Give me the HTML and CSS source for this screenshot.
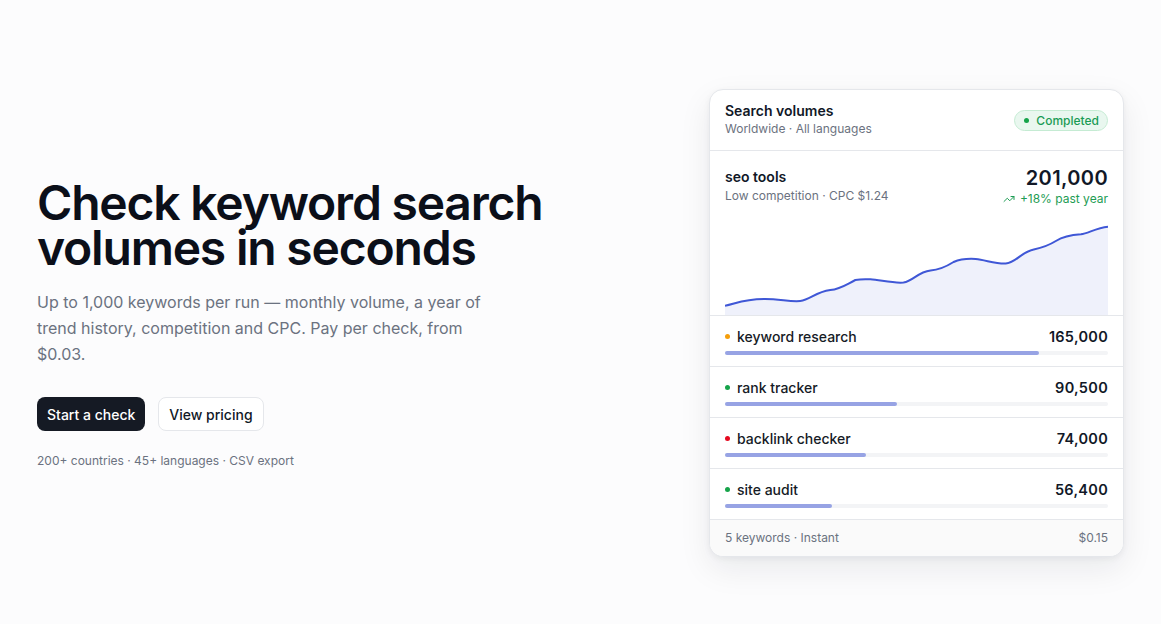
FILE: index.html
```html
<!DOCTYPE html>
<html lang="en">
<head>
    <meta charset="UTF-8">
    <meta name="viewport" content="width=device-width, initial-scale=1.0">
    <title>Keyword Search Volume Checker</title>
    <link rel="stylesheet" href="styles.css">
</head>
<body>
    <main class="hero">
        <div class="hero-copy">
            <h1>Check keyword search volumes in seconds</h1>
            <p class="lead">Up to 1,000 keywords per run — monthly volume, a year of trend history, competition and CPC. Pay per check, from $0.03.</p>
            <div class="actions">
                <a class="btn btn-dark" href="#">Start a check</a>
                <a class="btn btn-light" href="#">View pricing</a>
            </div>
            <p class="meta">200+ countries · 45+ languages · CSV export</p>
        </div>

        <div class="card">
            <div class="card-head">
                <div>
                    <div class="card-title">Search volumes</div>
                    <div class="card-sub">Worldwide · All languages</div>
                </div>
                <span class="badge"><span class="badge-dot"></span>Completed</span>
            </div>

            <div class="main-kw">
                <div class="main-top">
                    <div>
                        <div class="kw-name">seo tools</div>
                        <div class="card-sub">Low competition · CPC $1.24</div>
                    </div>
                    <div class="main-num">
                        <div class="big">201,000</div>
                        <div class="trend">
                            <svg width="12" height="12" viewBox="0 0 24 24" fill="none" stroke="currentColor" stroke-width="2" stroke-linecap="round" stroke-linejoin="round"><polyline points="22 7 13.5 15.5 8.5 10.5 2 17"/><polyline points="16 7 22 7 22 13"/></svg>
                            +18% past year
                        </div>
                    </div>
                </div>
                <svg class="chart" viewBox="0 0 382 93" preserveAspectRatio="none">
                    <path class="chart-fill" d="M0 83.7 C10 82 18 77 40 77 C55 77 65 80 75 79 C85 78 90 70 105 68 C115 67 120 63 130 58 C135 57 140 57 145 57.3 C155 58 168 61.5 178 60.5 C188 59 192 50 205 48.5 C212 48 220 45 228 40 C235 37 242 36.5 250 37 C260 38 270 42 280 41.5 C290 41 295 30 308 27.5 C315 26 322 24 330 19 C338 14 345 13 355 12.3 C362 11.5 370 6 382 4.7 L382 93 L0 93 Z"/>
                    <path class="chart-line" d="M0 83.7 C10 82 18 77 40 77 C55 77 65 80 75 79 C85 78 90 70 105 68 C115 67 120 63 130 58 C135 57 140 57 145 57.3 C155 58 168 61.5 178 60.5 C188 59 192 50 205 48.5 C212 48 220 45 228 40 C235 37 242 36.5 250 37 C260 38 270 42 280 41.5 C290 41 295 30 308 27.5 C315 26 322 24 330 19 C338 14 345 13 355 12.3 C362 11.5 370 6 382 4.7"/>
                </svg>
            </div>

            <div class="row">
                <div class="row-top">
                    <span class="row-name"><span class="dot orange"></span>keyword research</span>
                    <span class="row-num">165,000</span>
                </div>
                <div class="bar"><div class="bar-fill" style="width: 82%"></div></div>
            </div>
            <div class="row">
                <div class="row-top">
                    <span class="row-name"><span class="dot green"></span>rank tracker</span>
                    <span class="row-num">90,500</span>
                </div>
                <div class="bar"><div class="bar-fill" style="width: 45%"></div></div>
            </div>
            <div class="row">
                <div class="row-top">
                    <span class="row-name"><span class="dot red"></span>backlink checker</span>
                    <span class="row-num">74,000</span>
                </div>
                <div class="bar"><div class="bar-fill" style="width: 36.8%"></div></div>
            </div>
            <div class="row">
                <div class="row-top">
                    <span class="row-name"><span class="dot green"></span>site audit</span>
                    <span class="row-num">56,400</span>
                </div>
                <div class="bar"><div class="bar-fill" style="width: 28%"></div></div>
            </div>

            <div class="card-foot">
                <span>5 keywords · Instant</span>
                <span>$0.15</span>
            </div>
        </div>
    </main>
</body>
</html>
```

FILE: styles.css
```css
* {
    box-sizing: border-box;
}
body {
    margin: 0;
    font-family: Inter, "Noto Sans", Arial, sans-serif;
    background: #fcfcfd;
    color: #111827;
}
.hero {
    min-height: 624px;
    padding: 22px 37px 0 37px;
    display: flex;
    align-items: center;
    justify-content: space-between;
}
.hero-copy {
    width: 520px;
    padding-top: 3px;
}
h1 {
    margin: 0;
    font-size: 48px;
    line-height: 45px;
    font-weight: 600;
    letter-spacing: -0.025em;
    color: #0b0f19;
}
.lead {
    margin: 19px 0 0;
    max-width: 460px;
    font-size: 16px;
    line-height: 26px;
    color: #6b7280;
}
.actions {
    display: flex;
    gap: 13px;
    margin-top: 30px;
}
.btn {
    display: inline-flex;
    align-items: center;
    height: 34px;
    padding: 0 10px;
    border-radius: 8px;
    font-size: 14px;
    font-weight: 500;
    text-decoration: none;
}
.btn-dark {
    background: #151a24;
    color: #fff;
}
.btn-light {
    background: #fff;
    color: #111827;
    border: 1px solid #e5e7eb;
}
.meta {
    margin: 22px 0 0;
    font-size: 12px;
    line-height: 16px;
    color: #6b7280;
}

.card {
    width: 415px;
    background: #fff;
    border: 1px solid #e5e7eb;
    border-radius: 14px;
    box-shadow: 0 12px 32px rgba(17, 24, 39, 0.08), 0 2px 6px rgba(17, 24, 39, 0.05);
    overflow: hidden;
}
.card-head {
    display: flex;
    justify-content: space-between;
    align-items: center;
    padding: 12px 15px;
    border-bottom: 1px solid #e5e7eb;
}
.card-title {
    font-size: 14px;
    line-height: 18px;
    font-weight: 600;
}
.card-sub {
    font-size: 12px;
    line-height: 18px;
    color: #6b7280;
}
.badge {
    display: inline-flex;
    align-items: center;
    gap: 7px;
    height: 21px;
    padding: 0 8px 0 9px;
    border-radius: 999px;
    background: #e9f7ef;
    border: 1px solid #c5ebd3;
    color: #1a9b55;
    font-size: 12px;
    font-weight: 500;
}
.badge-dot {
    width: 5px;
    height: 5px;
    border-radius: 50%;
    background: #16a34a;
}
.main-kw {
    padding: 16px 15px 0;
}
.main-top {
    display: flex;
    justify-content: space-between;
    margin-bottom: 15px;
}
.kw-name {
    font-size: 14px;
    line-height: 20px;
    font-weight: 600;
}
.main-num {
    text-align: right;
}
.big {
    font-size: 20px;
    line-height: 22px;
    font-weight: 600;
    letter-spacing: 0.02em;
}
.trend {
    display: flex;
    align-items: center;
    justify-content: flex-end;
    gap: 5px;
    margin-top: 2px;
    font-size: 12px;
    line-height: 16px;
    color: #1f9d55;
}
.chart {
    display: block;
    width: 100%;
    height: 93px;
}
.chart-fill {
    fill: #eff1fb;
}
.chart-line {
    fill: none;
    stroke: #3f57d6;
    stroke-width: 2;
}
.row {
    padding: 10px 15px 11px;
    border-top: 1px solid #e5e7eb;
}
.row-top {
    display: flex;
    justify-content: space-between;
    align-items: center;
    height: 20px;
    font-size: 14px;
}
.row-name {
    display: flex;
    align-items: center;
    gap: 7px;
    font-weight: 500;
    color: #161b26;
}
.row-num {
    font-size: 14.5px;
    font-weight: 600;
    letter-spacing: 0.02em;
}
.dot {
    width: 5px;
    height: 5px;
    border-radius: 50%;
}
.orange { background: #f59e0b; }
.green { background: #16a34a; }
.red { background: #e5091f; }
.bar {
    margin-top: 5px;
    height: 4px;
    border-radius: 2px;
    background: #f3f4f6;
}
.bar-fill {
    height: 100%;
    border-radius: 2px;
    background: #97a3e4;
}
.card-foot {
    display: flex;
    justify-content: space-between;
    padding: 10px 15px;
    border-top: 1px solid #e5e7eb;
    background: #fafafa;
    font-size: 12px;
    line-height: 16px;
    color: #6b7280;
}
```
